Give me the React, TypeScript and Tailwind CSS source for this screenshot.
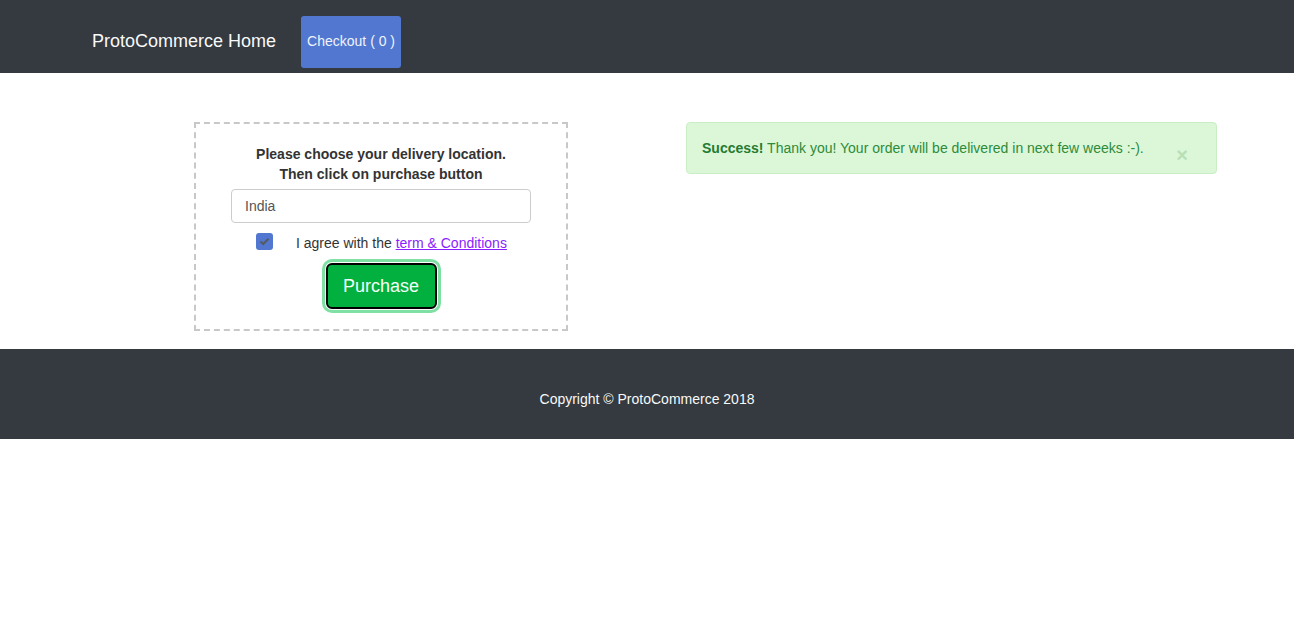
import React, { useState } from "react";

export default function App() {
  const [country, setCountry] = useState("India");
  const [agree, setAgree] = useState(true);

  return (
    <div className="min-h-screen bg-white font-['Liberation_Sans',Arial,sans-serif] text-[#212529]">
      {/* Navbar */}
      <nav className="flex h-[73px] items-center bg-[#343a40] pt-[10px] pl-[92px]">
        <a href="#" className="text-[18px] leading-[27px] text-[#f8f9fa]">
          ProtoCommerce Home
        </a>
        <button
          type="button"
          className="ml-[25px] h-[52px] w-[100px] rounded-[3px] bg-[#5177d0] text-[14px] text-[#f0f3fa]"
        >
          Checkout ( 0 )
        </button>
      </nav>

      {/* Content */}
      <div className="flex items-start pt-[49px] pb-[18px]">
        <div className="ml-[194px] w-[374px] border-2 border-dashed border-[#c8c8c8] px-[35px] pt-[20px] pb-[20px]">
          <div className="text-center text-[14px] leading-[20px] font-bold text-[#333]">
            Please choose your delivery location.
            <br />
            Then click on purchase button
          </div>
          <input
            value={country}
            onChange={(e) => setCountry(e.target.value)}
            className="mt-[5px] block h-[34px] w-[300px] rounded-[4px] border border-[#ccc] px-[13px] text-[14px] text-[#555] outline-none"
          />
          <label className="mt-[10px] flex items-start text-[14px] leading-[20px] text-[#333]">
            <span
              onClick={() => setAgree(!agree)}
              className="ml-[25px] flex h-[17px] w-[17px] items-center justify-center rounded-[3px] bg-[#5177d0]"
            >
              {agree && (
                <svg width="11" height="9" viewBox="0 0 11 9">
                  <path
                    d="M1.5 4.5 L4.2 7 L9.5 1.8"
                    fill="none"
                    stroke="#555b64"
                    strokeWidth="2.2"
                  />
                </svg>
              )}
            </span>
            <span className="ml-[23px]">
              I agree with the{" "}
              <a href="#" className="text-[#8a1eff] underline">
                term &amp; Conditions
              </a>
            </span>
          </label>
          <div className="mt-[10px] flex justify-center">
            <button
              type="button"
              className="h-[46px] w-[111px] rounded-[6px] border-2 border-black bg-[#02b03f] text-[18px] text-[#f4fff8] ring-[3px] ring-[#7ee0a2] ring-offset-1 ring-offset-white"
            >
              Purchase
            </button>
          </div>
        </div>

        <div className="ml-[118px] flex h-[52px] w-[531px] items-start justify-between rounded-[4px] border border-[#c9eec5] bg-[#dbf7d8] pl-[15px] pr-[28px] pt-[15px] text-[14px] leading-[20px] text-[#2e8b3a]">
          <div>
            <strong className="text-[#267a31]">Success!</strong> Thank you!
            Your order will be delivered in next few weeks :-).
          </div>
          <span className="mt-[10px] text-[20px] leading-[14px] font-bold text-[#b9dfb7]">
            ×
          </span>
        </div>
      </div>

      {/* Footer */}
      <footer className="flex h-[90px] items-start justify-center bg-[#343a40] pt-[40px] text-[14px] leading-[20px] text-[#f8f9fa]">
        Copyright © ProtoCommerce 2018
      </footer>
    </div>
  );
}
